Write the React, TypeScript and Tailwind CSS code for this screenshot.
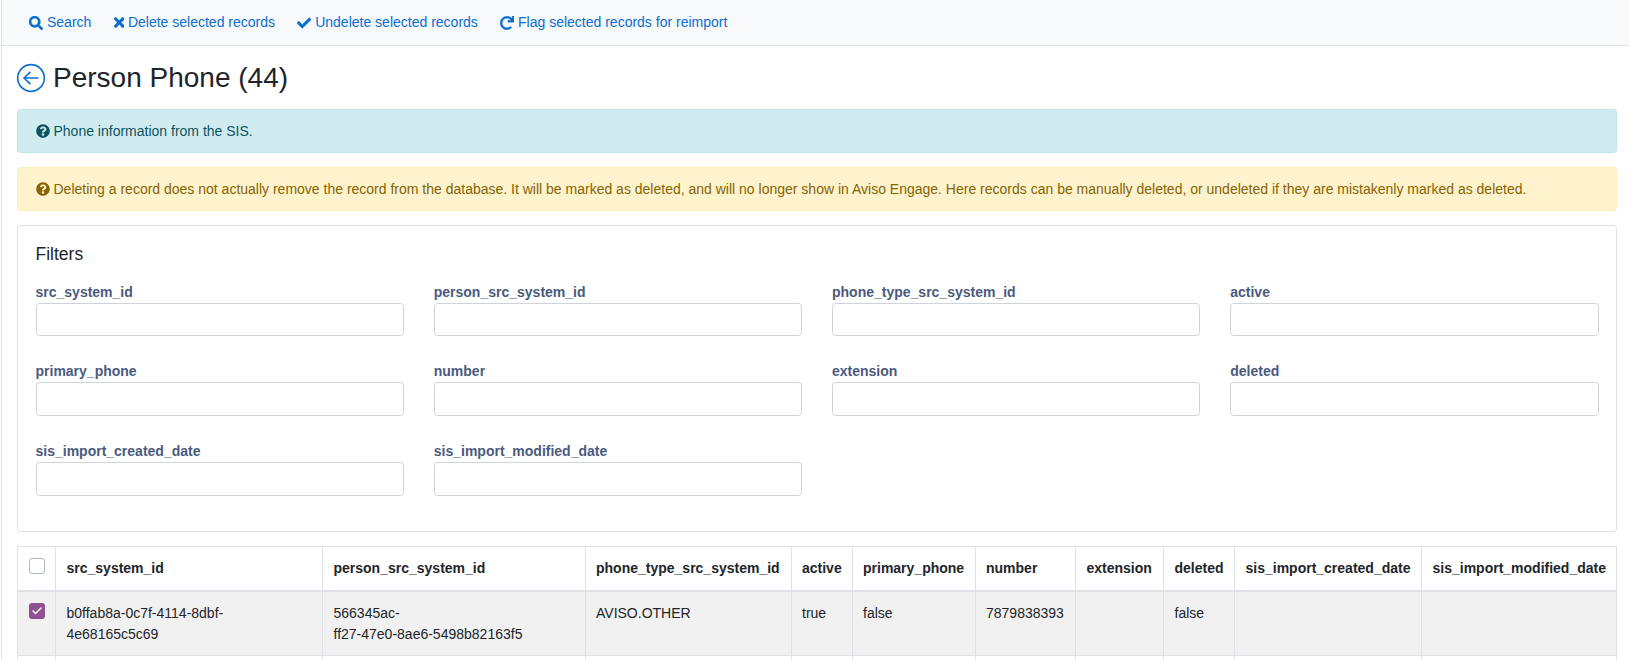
import { Check } from 'lucide-react';
import { FaSearch, FaTimes, FaCheck, FaRedo, FaQuestionCircle } from 'react-icons/fa';

const navLinks = [
  { label: 'Search', icon: FaSearch, iconSize: 'h-[14px] w-[14px]' },
  { label: 'Delete selected records', icon: FaTimes, iconSize: 'h-[15px] w-[10.4px]' },
  { label: 'Undelete selected records', icon: FaCheck, iconSize: 'h-[14px] w-[14px]' },
  { label: 'Flag selected records for reimport', icon: FaRedo, iconSize: 'h-[14px] w-[14px]' },
];

const filters = [
  'src_system_id',
  'person_src_system_id',
  'phone_type_src_system_id',
  'active',
  'primary_phone',
  'number',
  'extension',
  'deleted',
  'sis_import_created_date',
  'sis_import_modified_date',
];

const columns = [
  { name: 'src_system_id', width: 'w-[267px]' },
  { name: 'person_src_system_id', width: 'w-[262.5px]' },
  { name: 'phone_type_src_system_id', width: 'w-[206px]' },
  { name: 'active', width: 'w-[61px]' },
  { name: 'primary_phone', width: 'w-[123px]' },
  { name: 'number', width: 'w-[100.5px]' },
  { name: 'extension', width: 'w-[88px]' },
  { name: 'deleted', width: 'w-[71px]' },
  { name: 'sis_import_created_date', width: 'w-[187px]' },
  { name: 'sis_import_modified_date', width: 'w-[195px]' },
];

const row = [
  'b0ffab8a-0c7f-4114-8dbf-\n4e68165c5c69',
  '566345ac-\nff27-47e0-8ae6-5498b82163f5',
  'AVISO.OTHER',
  'true',
  'false',
  '7879838393',
  '',
  'false',
  '',
  '',
];

function BackIcon() {
  return (
    <svg viewBox="0 0 24 24" fill="none" stroke="currentColor" strokeWidth={1.2} strokeLinecap="round" strokeLinejoin="round" className="-ml-[2.5px] h-[32px] w-[32px] text-[#0a6ed1]">
      <circle cx="12" cy="12" r="10" />
      <path d="M6.8 12H17.2" />
      <path d="M11.2 7.8 6.8 12l4.4 4.2" />
    </svg>
  );
}

export default function App() {
  return (
    <div className="h-screen overflow-hidden bg-white font-['Liberation_Sans',Arial,sans-serif] text-[14px] leading-[21px] text-[#212529]">
      <div className="ml-px h-full border-l border-[#dee2e6]">
        <nav className="flex h-[46px] items-center border-b border-[#dfe1e4] bg-[#f8f9fa] pl-[15.9px]">
          {navLinks.map((link) => (
            <a key={link.label} className="flex items-center gap-[4px] px-[11.1px] text-[#0a6ed1]">
              <link.icon className={link.iconSize} stroke="currentColor" strokeWidth={14} />
              {link.label}
            </a>
          ))}
        </nav>

        <div className="pl-[15px] pr-[12px]">
          <div className="flex h-[63px] items-center gap-[6.5px] pt-[1px]">
            <BackIcon />
            <h3 className="text-[28px] leading-[34px]">Person Phone (44)</h3>
          </div>

          <div className="flex h-[44px] items-center gap-[4px] rounded-[3.5px] border border-[#bee5eb] bg-[#d1ecf1] px-[17.5px] text-[#0c5460]">
            <FaQuestionCircle className="h-[14px] w-[14px]" />
            Phone information from the SIS.
          </div>

          <div className="mt-[14px] flex h-[44px] items-center gap-[4px] rounded-[3.5px] border border-[#ffeeba] bg-[#fff3cd] px-[17.5px] text-[#856404]">
            <FaQuestionCircle className="h-[14px] w-[14px]" />
            Deleting a record does not actually remove the record from the database. It will be marked as deleted, and will no longer show in Aviso Engage. Here records can be manually deleted, or undeleted if they are mistakenly marked as deleted.
          </div>

          <div className="mt-[14px] h-[307px] rounded-[3.5px] border border-[#dfe1e4] px-[17.5px] pt-[18px]">
            <h5 className="text-[17.5px] leading-[21px]">Filters</h5>
            <div className="mt-[16.5px] grid grid-cols-4 gap-x-[30px] gap-y-[25.3px]">
              {filters.map((name) => (
                <div key={name}>
                  <label className="block font-bold text-[#4a5a7d]">{name}</label>
                  <input className="block h-[33.5px] w-full rounded-[3.5px] border border-[#ced4da] bg-white" />
                </div>
              ))}
            </div>
          </div>

          <table className="mt-[14px] w-full table-fixed border-collapse">
            <thead>
              <tr>
                <th className="h-[44.5px] w-[38px] border border-b-2 border-[#dee2e6] px-[10.5px] py-[10.5px] align-top">
                  <span className="block h-[16px] w-[16px] rounded-[3px] border border-[#adb5bd] bg-white" />
                </th>
                {columns.map((col) => (
                  <th key={col.name} className={`${col.width} border border-b-2 border-[#dee2e6] p-[10.5px] text-left font-bold whitespace-nowrap`}>
                    {col.name}
                  </th>
                ))}
              </tr>
            </thead>
            <tbody>
              <tr className="bg-[#f1f1f1]">
                <td className="border border-[#dee2e6] px-[10.5px] pt-[10.75px] pb-[9.75px] align-top">
                  <span className="flex h-[16px] w-[16px] items-center justify-center rounded-[3px] bg-[#8f5091] text-white">
                    <Check className="h-[12px] w-[12px]" strokeWidth={3} />
                  </span>
                </td>
                {row.map((value, index) => (
                  <td key={index} className="border border-[#dee2e6] px-[10.5px] pt-[10.75px] pb-[9.75px] align-top whitespace-pre-line">
                    {value}
                  </td>
                ))}
              </tr>
              <tr>
                <td className="h-[64px] border border-[#dee2e6]" />
                {row.map((_, index) => (
                  <td key={index} className="border border-[#dee2e6]" />
                ))}
              </tr>
            </tbody>
          </table>
        </div>
      </div>
    </div>
  );
}
